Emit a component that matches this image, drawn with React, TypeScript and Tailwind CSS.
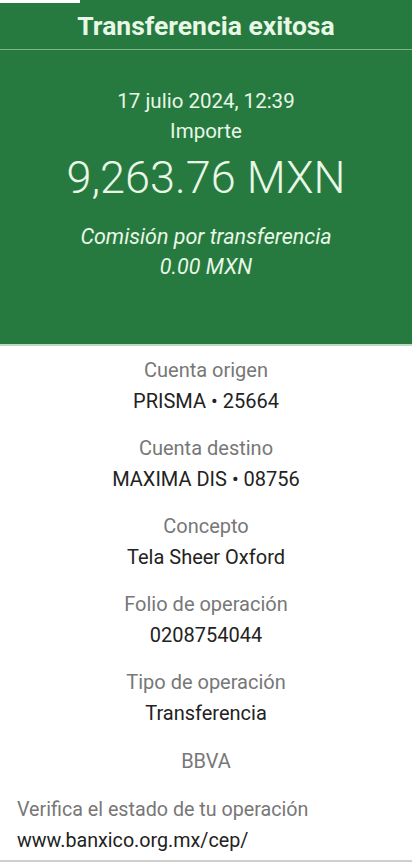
const rows = [
  { label: "Cuenta origen", value: "PRISMA • 25664" },
  { label: "Cuenta destino", value: "MAXIMA DIS • 08756" },
  { label: "Concepto", value: "Tela Sheer Oxford" },
  { label: "Folio de operación", value: "0208754044" },
  { label: "Tipo de operación", value: "Transferencia" },
];

const App = () => {
  return (
    <div className="w-[412px] h-[863px] bg-white flex flex-col font-['Roboto',sans-serif] overflow-hidden">
      {/* green summary */}
      <div className="bg-[#277a3f] h-[344px] flex flex-col text-[#e8f7e6]">
        <div className="w-[80px] h-[3px] bg-white"></div>
        <div className="h-[46px] flex items-center justify-center font-bold text-[26.5px]">
          Transferencia exitosa
        </div>
        <div className="h-px bg-[#7fb38c]"></div>
        <div className="flex flex-col items-center pt-[36px]">
          <div className="text-[20.5px] leading-[30px]">17 julio 2024, 12:39</div>
          <div className="text-[20.5px] leading-[30px]">Importe</div>
          <div className="text-[45px] font-light leading-[60px] mt-[2px]">9,263.76 MXN</div>
          <div className="italic text-[21.5px] leading-[30px] mt-[14px]">Comisión por transferencia</div>
          <div className="italic text-[21.5px] leading-[30px]">0.00 MXN</div>
        </div>
      </div>
      <div className="h-[2px] bg-[#b9dcc0]"></div>

      {/* details */}
      <div className="flex flex-col items-center pt-[9px]">
        {rows.map((r) => (
          <div key={r.label} className="flex flex-col items-center mb-[16px]">
            <div className="text-[20px] leading-[31px] text-[#777]">{r.label}</div>
            <div className="text-[20px] leading-[31px] text-[#222]">{r.value}</div>
          </div>
        ))}
        <div className="text-[20px] leading-[31px] text-[#777] mt-[1px]">BBVA</div>
      </div>
      <div className="px-[17px] pt-[17px]">
        <div className="text-[19.7px] leading-[31px] text-[#777]">Verifica el estado de tu operación</div>
        <div className="text-[19.7px] leading-[31px] text-[#222]">www.banxico.org.mx/cep/</div>
      </div>
      <div className="flex-1"></div>
      <div className="h-[2px] bg-[#cfcfcf] mb-[1px]"></div>
    </div>
  );
};

export default App;
